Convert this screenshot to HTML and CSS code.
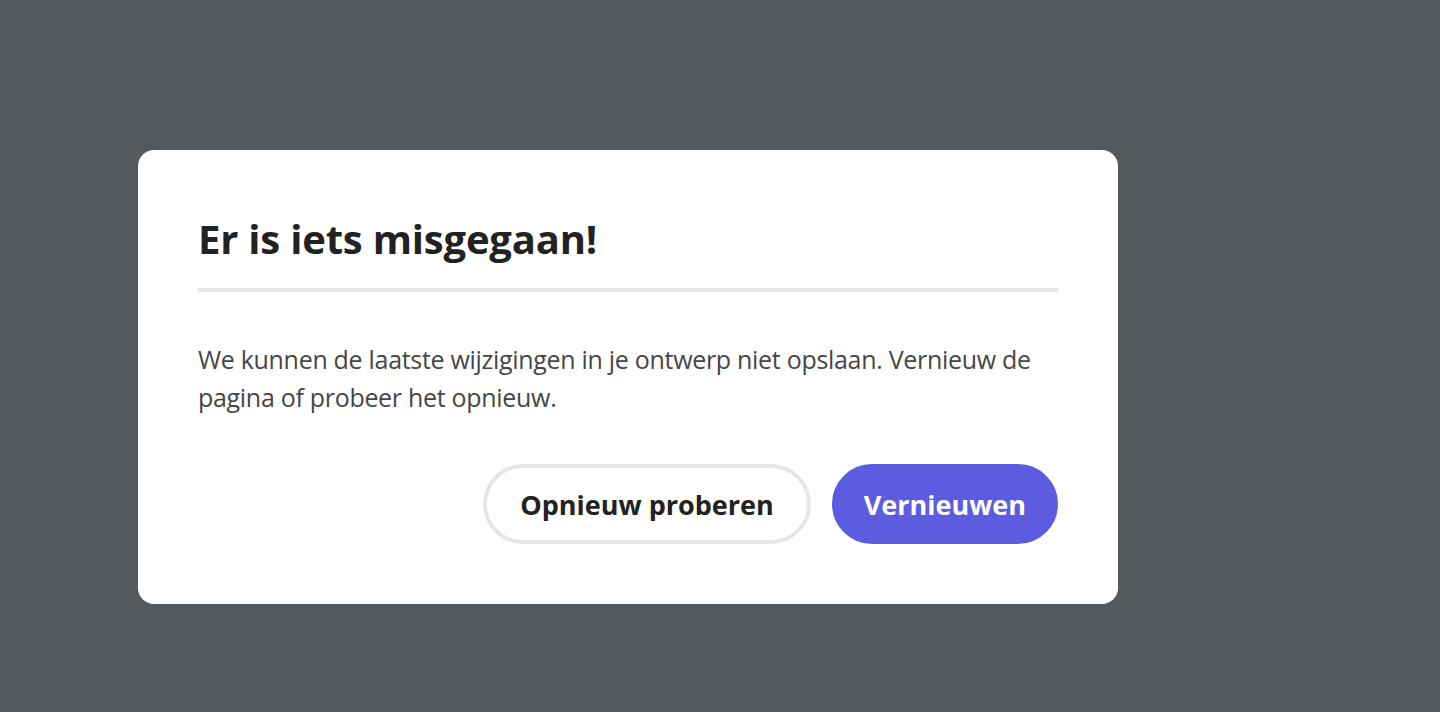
FILE: index.html
```html
<!DOCTYPE html>
<html lang="nl">
<head>
<meta charset="utf-8">
<title>Er is iets misgegaan!</title>
<link rel="stylesheet" href="styles.css">
</head>
<body>
<div class="backdrop">
  <section class="dialog" role="alertdialog" aria-labelledby="dlg-title">
    <h1 class="dialog-title" id="dlg-title">Er is iets misgegaan!</h1>
    <hr class="dialog-divider">
    <p class="dialog-body">We kunnen de laatste wijzigingen in je ontwerp niet opslaan. Vernieuw de pagina of probeer het opnieuw.</p>
    <div class="dialog-actions">
      <button class="btn btn-secondary" type="button">Opnieuw proberen</button>
      <button class="btn btn-primary" type="button">Vernieuwen</button>
    </div>
  </section>
</div>
</body>
</html>
```
FILE: styles.css
```css
* { box-sizing: border-box; }
html, body { margin: 0; height: 100%; }
body {
  background: #53595c;
  font-family: "Open Sans", "Liberation Sans", sans-serif;
}
.backdrop {
  padding: 150px 0 0 138px;
}
.dialog {
  width: 980px;
  background: #ffffff;
  border-radius: 16px;
  padding: 60px;
}
.dialog-title {
  margin: 0;
  font-size: 40px;
  line-height: 57px;
  font-weight: 700;
  color: #222222;
  letter-spacing: -0.2px;
}
.dialog-divider {
  margin: 21px 0 0;
  border: 0;
  height: 4px;
  background: #e6e6e6;
}
.dialog-body {
  margin: 48px 0 0;
  font-size: 25px;
  line-height: 38px;
  color: #464646;
  letter-spacing: -0.3px;
}
.dialog-actions {
  display: flex;
  justify-content: flex-end;
  gap: 21px;
  margin-top: 48px;
}
.btn {
  height: 80px;
  border-radius: 40px;
  border: 4px solid #e6e6e6;
  font-family: inherit;
  font-size: 27px;
  font-weight: 700;
  cursor: pointer;
}
.btn-secondary {
  padding: 0 33px;
  background: #ffffff;
  color: #222222;
}
.btn-primary {
  padding: 0 28px;
  background: #5c5ce0;
  border-color: #5c5ce0;
  color: #ffffff;
}
```
